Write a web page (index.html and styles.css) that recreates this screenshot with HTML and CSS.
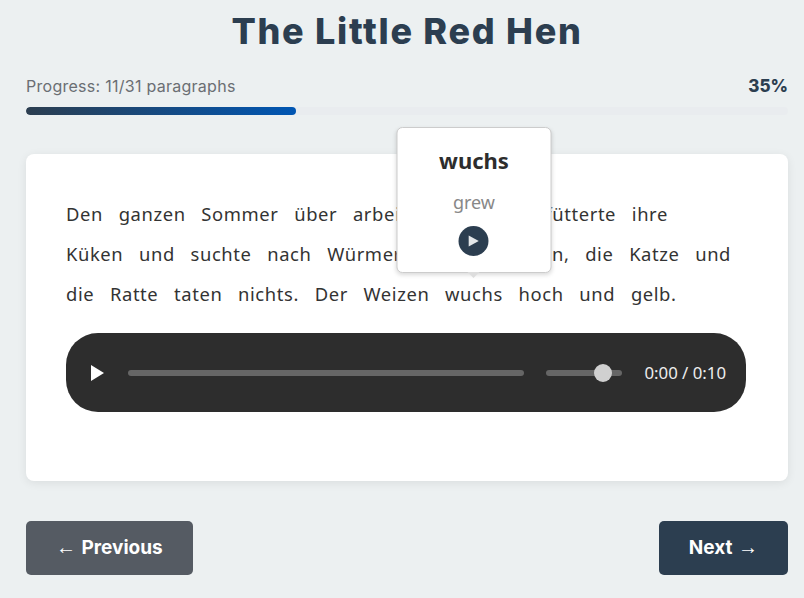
FILE: index.html
```html
<!DOCTYPE html>
<html lang="de">
<head>
<meta charset="utf-8">
<title>The Little Red Hen</title>
<link rel="stylesheet" href="styles.css">
</head>
<body>
<main class="page">
  <h1 class="title">The Little Red Hen</h1>
  <div class="progress-head">
    <span class="progress-label">Progress: 11/31 paragraphs</span>
    <span class="progress-value">35%</span>
  </div>
  <div class="progress-track"><div class="progress-fill"></div></div>
  <section class="card">
    <p class="story">
      <span class="word">Den</span> <span class="word">ganzen</span> <span class="word">Sommer</span> <span class="word">über</span> <span class="word">arbeitete</span> <span class="word">sie</span> <span class="word">und</span> <span class="word">fütterte</span> <span class="word">ihre</span> <span class="word">Küken</span> <span class="word">und</span> <span class="word">suchte</span> <span class="word">nach</span> <span class="word">Würmern.</span> <span class="word word-wide">Das</span> <span class="word">Schwein,</span> <span class="word">die</span> <span class="word">Katze</span> <span class="word">und</span> <span class="word">die</span> <span class="word">Ratte</span> <span class="word">taten</span> <span class="word">nichts.</span> <span class="word">Der</span> <span class="word">Weizen</span> <span class="word word-active">wuchs<span class="popup"><strong class="popup-word">wuchs</strong><span class="popup-trans">grew</span><button class="popup-play" aria-label="Play"><svg width="12" height="12" viewBox="0 0 10 10"><polygon points="1,0.5 9.4,5 1,9.5" fill="#e4e7e9"/></svg></button></span></span> <span class="word">hoch</span> <span class="word">und</span> <span class="word">gelb.</span>
    </p>
    <div class="player">
      <svg class="player-play" width="13" height="16" viewBox="0 0 13 16"><polygon points="0,0 13,8 0,16" fill="#fff"/></svg>
      <div class="player-track"></div>
      <div class="player-volume"><span class="player-thumb"></span></div>
      <span class="player-time">0:00 / 0:10</span>
    </div>
  </section>
  <nav class="nav">
    <button class="btn btn-prev"><span class="arrow">←</span> Previous</button>
    <button class="btn btn-next">Next <span class="arrow">→</span></button>
  </nav>
</main>
</body>
</html>
```
FILE: styles.css
```css
* { box-sizing: border-box; }
html, body { margin: 0; height: 100%; }
body {
  background: #ecf0f1;
  font-family: "Noto Sans", sans-serif;
  color: #2d2d2d;
  overflow: hidden;
}
.page { padding: 0 16px 0 26px; }
.title {
  margin: 0;
  padding-top: 8px;
  height: 72px;
  text-align: center;
  font-family: Inter, sans-serif;
  font-weight: 800;
  font-size: 36px;
  line-height: 46px;
  letter-spacing: 1.7px;
  color: #2c3e50;
}
.progress-head {
  display: flex;
  justify-content: space-between;
  align-items: center;
  height: 27px;
  font-family: Inter, sans-serif;
  font-size: 16px;
}
.progress-label { color: #6a6e73; letter-spacing: 0.27px; }
.progress-value { font-size: 17px; font-weight: 800; color: #2c3e50; }
.progress-track {
  margin-top: 8px;
  height: 8px;
  background: #e9ecef;
  border-radius: 4px;
  overflow: hidden;
}
.progress-fill {
  width: 35.48%;
  height: 100%;
  background: linear-gradient(90deg, #2c3e50, #0056b3);
  border-radius: 4px;
}
.card {
  margin-top: 39px;
  height: 327px;
  padding: 40px 42px 40px 40px;
  background: #fff;
  border-radius: 8px;
  box-shadow: 0 2px 10px rgba(0, 0, 0, 0.08);
}
.story {
  margin: 0;
  padding-right: 3px;
  font-size: 18.4px;
  letter-spacing: 0.6px;
  line-height: 40px;
  color: #333;
}
.word { position: relative; margin-right: 10.3px; }
.word-wide { margin-right: 13.8px; }
.popup {
  position: absolute;
  left: 50%;
  bottom: 33px;
  transform: translateX(-50%);
  width: 155px;
  height: 146px;
  display: flex;
  flex-direction: column;
  align-items: center;
  background: #fff;
  border: 1px solid #ccc;
  border-radius: 6px;
  box-shadow: 0 2px 4px rgba(0, 0, 0, 0.15);
  letter-spacing: 0;
}
.popup::after {
  content: "";
  position: absolute;
  left: 50%;
  top: 100%;
  margin-left: -6px;
  border: 6px solid transparent;
  border-top-color: #ddd;
}
.popup-word {
  margin-top: 16px;
  font-size: 22px;
  line-height: 32px;
  font-weight: 700;
  color: #2d2d2d;
}
.popup-trans {
  margin-top: 10px;
  font-size: 18px;
  line-height: 32px;
  color: #888;
}
.popup-play {
  margin-top: 8px;
  width: 30px;
  height: 30px;
  padding: 0;
  border: 0;
  border-radius: 50%;
  background: #2c3e50;
  display: flex;
  align-items: center;
  justify-content: center;
}
.player {
  margin-top: 19px;
  height: 79px;
  padding: 0 20px 0 25px;
  display: flex;
  align-items: center;
  background: #2d2d2d;
  border-radius: 32px;
}
.player-play { flex: none; }
.player-track {
  flex: 1;
  margin-left: 24px;
  height: 6px;
  background: #666;
  border-radius: 3px;
}
.player-volume {
  position: relative;
  flex: none;
  width: 76px;
  height: 6px;
  margin-left: 22px;
  background: #666;
  border-radius: 3px;
}
.player-thumb {
  position: absolute;
  left: 48px;
  top: -6px;
  width: 18px;
  height: 18px;
  border-radius: 50%;
  background: #d0d0d0;
}
.player-time {
  flex: none;
  margin-left: 22px;
  font-size: 16.8px;
  color: #eee;
}
.nav {
  margin-top: 40px;
  display: flex;
  justify-content: space-between;
}
.btn {
  height: 54px;
  padding: 0 30px 2px;
  border: 0;
  border-radius: 5px;
  color: #fff;
  font-family: Inter, sans-serif;
  font-weight: 700;
  font-size: 19px;
  word-spacing: 1px;
}
.arrow { font-family: "Liberation Sans", sans-serif; font-weight: 400; font-size: 20px; }
.btn-prev { background: #555b63; }
.btn-next { background: #2c3e50; }
```
